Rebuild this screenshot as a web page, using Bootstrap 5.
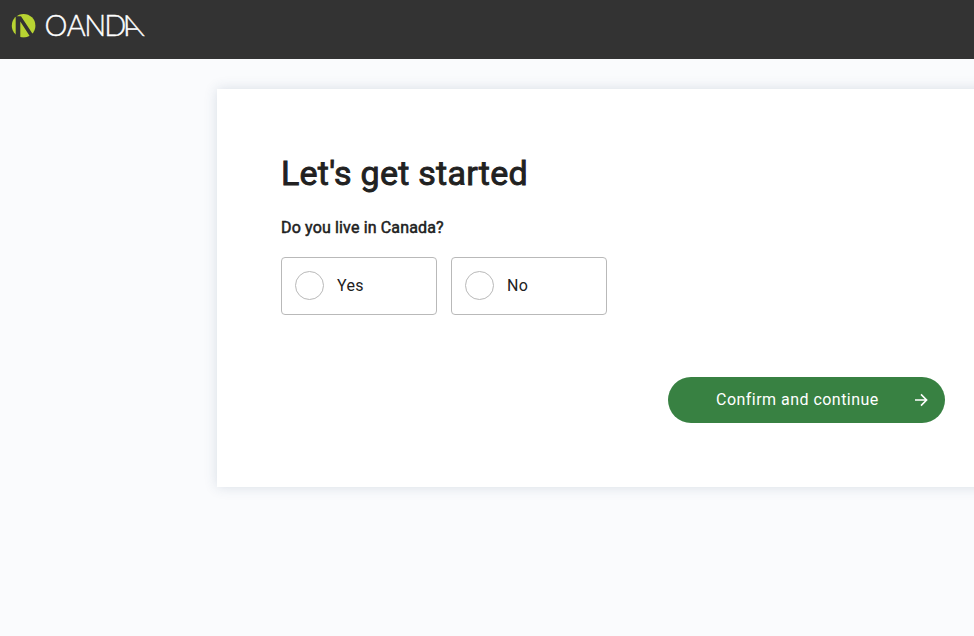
<!DOCTYPE html>
<html lang="en">
<head>
<meta charset="utf-8">
<meta name="viewport" content="width=device-width, initial-scale=1">
<title>OANDA - Let's get started</title>
<link href="https://cdn.jsdelivr.net/npm/bootstrap@5.3.0/dist/css/bootstrap.min.css" rel="stylesheet">
<style>
body{font-family:Roboto,"Liberation Sans",sans-serif;background:#fafbfd;color:#212121;min-height:100vh;overflow:hidden}
.topbar{background:#333;height:59px;padding:8px 0 0 11px}
.brand-text{font-family:Lato,sans-serif;font-weight:300;font-size:29px;fill:#fff;stroke:#fff;stroke-width:.4px}
.panel{margin:30px 0 0 217px;width:792px;height:398px;padding:63px 64px 64px;background:#fff;box-shadow:0 0 12px rgba(50,80,110,.17)}
.title{font-size:34px;line-height:42px;font-weight:400;letter-spacing:.25px;-webkit-text-stroke:.9px #212121;margin:0 0 22px}
.question{font-size:16px;line-height:24px;letter-spacing:.15px;-webkit-text-stroke:.5px #212121;margin:0 0 17px}
.choice{width:156px;height:58px;border:1px solid #b9b9b9;border-radius:4px;padding-left:13px;gap:13px;font-size:16px;letter-spacing:.3px;cursor:pointer}
.choice .form-check-input{width:29px;height:29px;border:1px solid #b9b9b9;margin:0 0 2px}
.choices{gap:14px}
.confirm{width:277px;height:46px;background:#388142;color:#fff;font-size:16px;letter-spacing:.47px;padding:0 17px 0 48px;border:0}
.confirm:hover{background:#2f7039;color:#fff}
</style>
</head>
<body>
<header class="topbar">
  <a href="#" class="d-inline-flex" aria-label="OANDA">
    <svg width="150" height="40" viewBox="0 -4 150 40">
      <defs><clipPath id="disc"><circle cx="12.6" cy="13.7" r="11.8"/></clipPath></defs>
      <g clip-path="url(#disc)" fill="#b8d432">
        <path d="M0 0H4.700V26H0Z"/>
        <path d="M9.300 26V9.500L19.800 25.800H9.300Z"/>
        <path d="M5.500 0H25V22.500H22L10 4.200H5.500Z"/>
      </g>
      <text class="brand-text" x="33.600 55.700 73.300 93.300" y="24">OAND</text>
      <text class="brand-text" transform="translate(114.700 24) skewX(23)">A</text>
    </svg>
  </a>
</header>
<main class="panel d-flex flex-column">
  <h1 class="title">Let's get started</h1>
  <p class="question">Do you live in Canada?</p>
  <div class="choices d-flex">
    <label class="choice d-flex align-items-center"><input class="form-check-input" type="radio" name="canada"><span>Yes</span></label>
    <label class="choice d-flex align-items-center"><input class="form-check-input" type="radio" name="canada"><span>No</span></label>
  </div>
  <button class="confirm btn rounded-pill d-flex align-items-center justify-content-between align-self-end mt-auto" type="button">
    <span>Confirm and continue</span>
    <svg width="14" height="14" viewBox="0 0 14 14" fill="none" stroke="#fff" stroke-width="1.600"><path d="M1 7H12.500M7 1.400L12.600 7L7 12.600"/></svg>
  </button>
</main>
<script src="https://cdn.jsdelivr.net/npm/bootstrap@5.3.0/dist/js/bootstrap.bundle.min.js"></script>
</body>
</html>
